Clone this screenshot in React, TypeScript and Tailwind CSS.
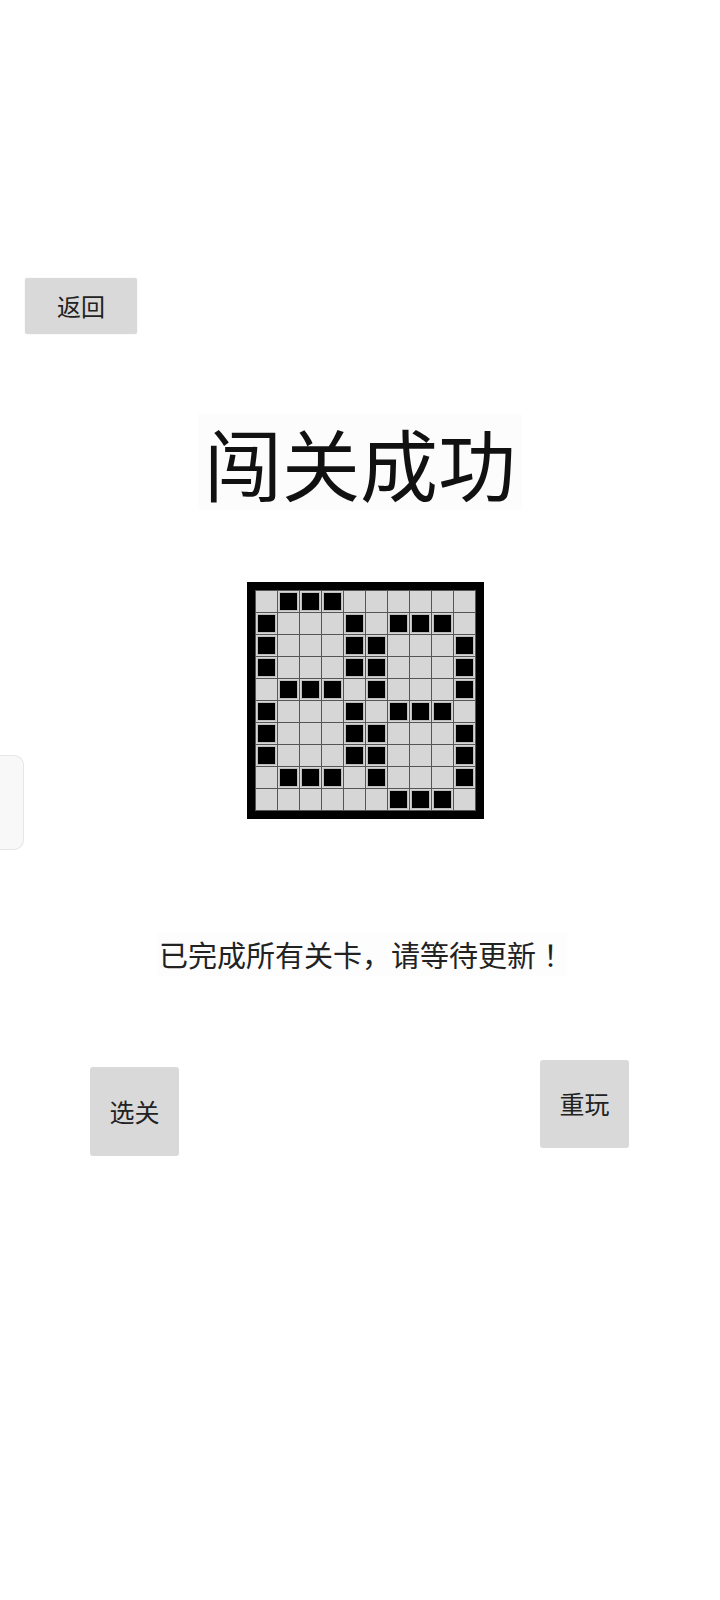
import React from "react"

// 10x10 关卡图案，1 = 黑格
const pattern = [
  "0111000000",
  "1000101110",
  "1000110001",
  "1000110001",
  "0111010001",
  "1000101110",
  "1000110001",
  "1000110001",
  "0111010001",
  "0000001110",
]

const font = { fontFamily: '"Noto Sans CJK SC", "Noto Sans", sans-serif' }

function Board() {
  return (
    <div className="border-[8px] border-black bg-[#555] p-px">
      <div className="grid grid-cols-10 gap-px">
        {pattern.flatMap((row, r) =>
          row.split("").map((c, i) => (
            <div key={`${r}-${i}`} className="h-[21px] w-[21px] bg-[#d6d6d6]">
              {c === "1" && (
                <div className="m-[1px] h-[19px] w-[19px] border border-[#bdbdbd] bg-black" />
              )}
            </div>
          ))
        )}
      </div>
    </div>
  )
}

export default function App() {
  return (
    <div className="relative min-h-[1600px] w-[720px] bg-white text-[#1a1a1a]" style={font}>
      {/* 左侧悬浮把手 */}
      <div className="absolute left-0 top-[755px] h-[95px] w-[24px] rounded-r-[10px] border border-l-0 border-[#e6e6e6] bg-[#f8f8f8]" />

      <div className="pl-[25px] pt-[278px]">
        <button className="flex h-[56px] w-[112px] items-center justify-center rounded-[2px] bg-[#d9d9d9] text-[24px] text-[#222] shadow-[0_0_2px_rgba(0,0,0,0.08)]">
          返回
        </button>
      </div>

      <div className="mt-[80px] flex justify-center">
        <h1 className="bg-[#fcfcfc] px-[6px] text-[78px] leading-[96px] font-normal text-[#111]">闯关成功</h1>
      </div>

      <div className="mt-[72px] flex justify-center pl-[10px]">
        <Board />
      </div>

      <div className="mt-[113px] flex justify-center pl-[4px]">
        <p className="bg-[#fdfdfd] px-[2px] text-[29px] leading-[44px] text-[#222]">
          已完成所有关卡，请等待更新<span style={{ fontFamily: '"Noto Sans CJK TC", sans-serif' }}>！</span>
        </p>
      </div>

      <div className="mt-[84px] flex items-start justify-between pl-[90px] pr-[91px]">
        <button className="mt-[7px] flex h-[89px] w-[89px] items-center justify-center rounded-[3px] bg-[#d9d9d9] text-[25px] text-[#222]">
          选关
        </button>
        <button className="flex h-[88px] w-[89px] items-center justify-center rounded-[3px] bg-[#d9d9d9] text-[25px] text-[#222]">
          重玩
        </button>
      </div>
    </div>
  )
}
